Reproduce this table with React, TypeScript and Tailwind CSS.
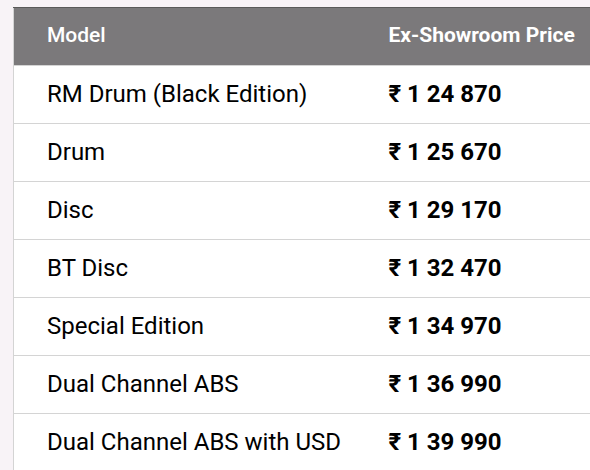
const rows = [
  { model: "RM Drum (Black Edition)", price: "₹ 1 24 870" },
  { model: "Drum", price: "₹ 1 25 670" },
  { model: "Disc", price: "₹ 1 29 170" },
  { model: "BT Disc", price: "₹ 1 32 470" },
  { model: "Special Edition", price: "₹ 1 34 970" },
  { model: "Dual Channel ABS", price: "₹ 1 36 990" },
  { model: "Dual Channel ABS with USD", price: "₹ 1 39 990" },
]

export default function App() {
  return (
    <div className="h-[470px] w-[590px] overflow-hidden bg-[#f8f3f7] pl-[13px] pt-[7px] font-['Roboto',sans-serif]">
      <table className="w-[640px] border-collapse border-l border-[#d4d4d4] bg-white text-left">
        <thead>
          <tr className="h-[58px] border-t border-[#5a5a5a] bg-[#7b797b] text-[21px] text-white">
            <th className="w-[375px] pb-[2px] pl-[33px] font-medium">Model</th>
            <th className="pb-[2px] font-bold">Ex-Showroom Price</th>
          </tr>
        </thead>
        <tbody>
          {rows.map((r, i) => (
            <tr key={i} className="h-[58px] border-t border-[#d4d4d4] text-[24px] text-black">
              <td className="pb-[2px] pl-[33px]">{r.model}</td>
              <td className="pb-[2px] font-bold">{r.price}</td>
            </tr>
          ))}
        </tbody>
      </table>
    </div>
  )
}
